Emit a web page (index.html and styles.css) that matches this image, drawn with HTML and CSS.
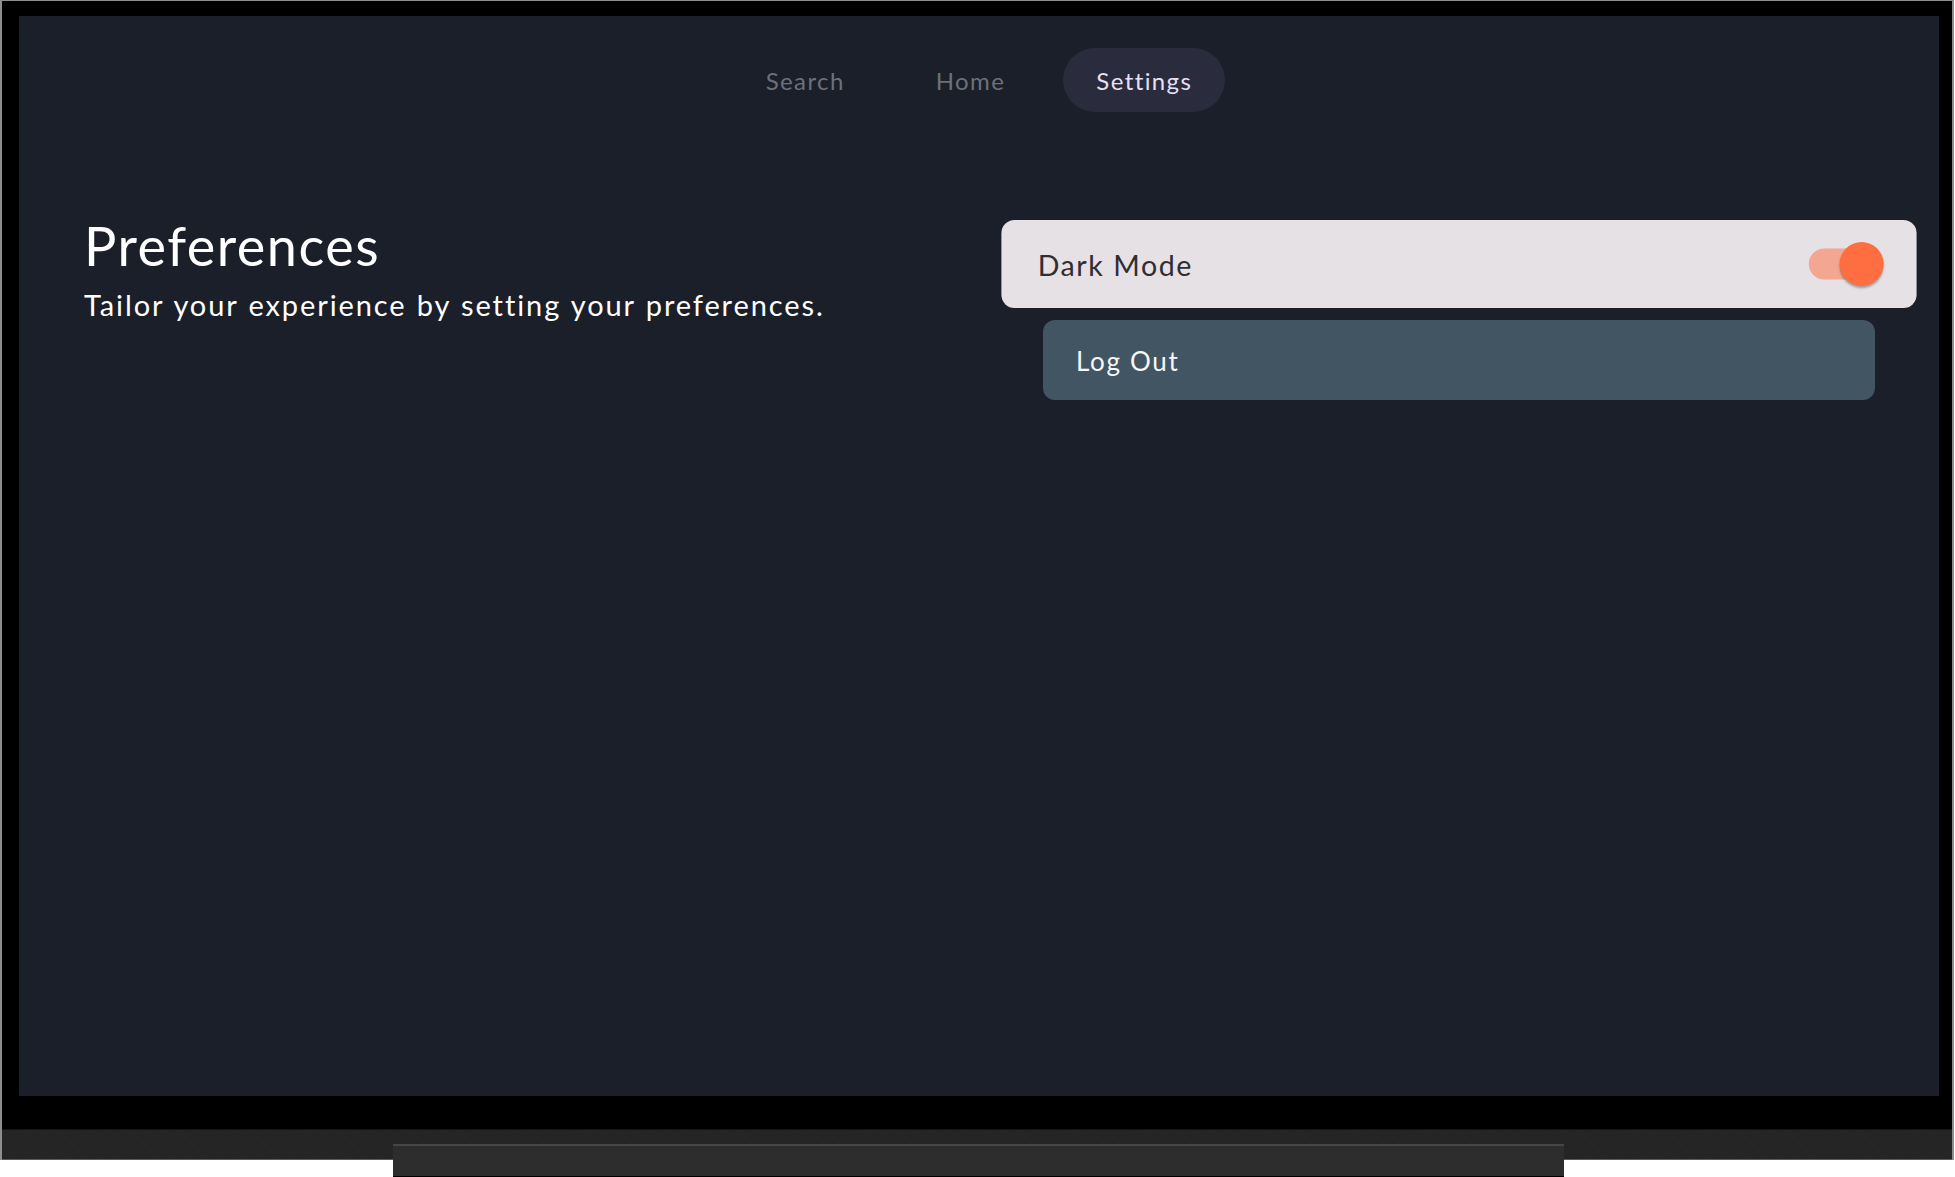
FILE: index.html
```html
<!DOCTYPE html>
<html lang="en">
<head>
<meta charset="utf-8">
<title>Settings</title>
<link rel="stylesheet" href="styles.css">
</head>
<body>
<div class="device">
  <div class="bezel">
    <main class="screen">
      <nav class="nav">
        <span class="nav-item">Search</span>
        <span class="nav-item">Home</span>
        <span class="nav-item active">Settings</span>
      </nav>
      <section class="content">
        <div class="intro">
          <h1 class="title">Preferences</h1>
          <p class="subtitle">Tailor your experience by setting your preferences.</p>
        </div>
        <div class="options">
          <div class="option focused">
            <span class="option-label">Dark Mode</span>
            <span class="switch">
              <span class="switch-track"></span>
              <span class="switch-thumb"></span>
            </span>
          </div>
          <div class="option logout">
            <span class="option-label">Log Out</span>
          </div>
        </div>
      </section>
    </main>
  </div>
  <div class="base"></div>
  <div class="stand"></div>
</div>
</body>
</html>
```

FILE: styles.css
```css
html, body {
  margin: 0;
  padding: 0;
  background: #ffffff;
}

body {
  font-family: Lato, "Noto Sans", sans-serif;
  width: 1955px;
  height: 1177px;
  overflow: hidden;
}

.device {
  position: relative;
  width: 1950px;
  border-left: 2px solid #8e8e8e;
  border-right: 2px solid #8e8e8e;
  border-top: 1px solid #8e8e8e;
}

.bezel {
  background: #000;
  padding: 15px 13px 33px 17px;
}

.screen {
  width: 1920px;
  height: 1080px;
  background: #1a1f2a;
  overflow: hidden;
}

.base {
  height: 29px;
  background:
    repeating-linear-gradient(45deg, rgba(255,255,255,0.015) 0 1px, transparent 1px 3px),
    #242424;
  border-top: 1px solid #141414;
  border-bottom: 1px solid #5a5a5a;
}

.stand {
  position: absolute;
  left: 391px;
  top: 1143px;
  width: 1171px;
  height: 30px;
  background: #2d2d2d;
  border-top: 2px solid #464646;
  box-shadow: 0 2px 0 0 #000;
}

.nav {
  display: flex;
  justify-content: center;
  gap: 25px;
  padding-top: 32px;
}

.nav-item {
  height: 64px;
  display: flex;
  align-items: center;
  padding: 0 33px;
  border-radius: 32px;
  font-size: 24px;
  letter-spacing: 1.4px;
  color: #6c7179;
}

.nav-item.active {
  background: #2a2b3d;
  color: #e5e0f6;
}

.content {
  display: grid;
  grid-template-columns: 832px 832px;
  column-gap: 128px;
  padding: 0 64px;
  margin-top: 101px;
}

.intro {
  padding: 1px 0 0 1px;
}

.title {
  margin: 0;
  font-size: 54px;
  font-weight: 400;
  line-height: 1.2;
  letter-spacing: 1.5px;
  color: #ffffff;
}

.subtitle {
  margin: 9px 0 0;
  font-size: 29px;
  line-height: 1.2;
  letter-spacing: 1.9px;
  word-spacing: 1px;
  color: #ffffff;
}

.options {
  display: flex;
  flex-direction: column;
  gap: 16px;
  margin-top: 11px;
}

.option {
  height: 80px;
  display: flex;
  align-items: center;
  justify-content: space-between;
  padding: 0 30px 0 33px;
  border-radius: 12px;
  box-sizing: border-box;
}

.option-label {
  font-size: 26px;
  letter-spacing: 1.4px;
  padding-top: 2px;
}

.logout .option-label {
  letter-spacing: 1.7px;
}

.focused {
  background: #e6e1e5;
  color: #2e2e33;
  transform: scale(1.1);
}

.logout {
  background: #425563;
  color: #f7f7f7;
}

.switch {
  position: relative;
  width: 68px;
  height: 40px;
}

.switch-track {
  position: absolute;
  left: 0;
  top: 6px;
  width: 58px;
  height: 28px;
  border-radius: 14px;
  background: rgba(255, 110, 64, 0.5);
}

.switch-thumb {
  position: absolute;
  right: 0;
  top: 0;
  width: 40px;
  height: 40px;
  border-radius: 50%;
  background: #ff6e40;
  box-shadow: 0 2px 2px rgba(0, 0, 0, 0.3);
}
```
